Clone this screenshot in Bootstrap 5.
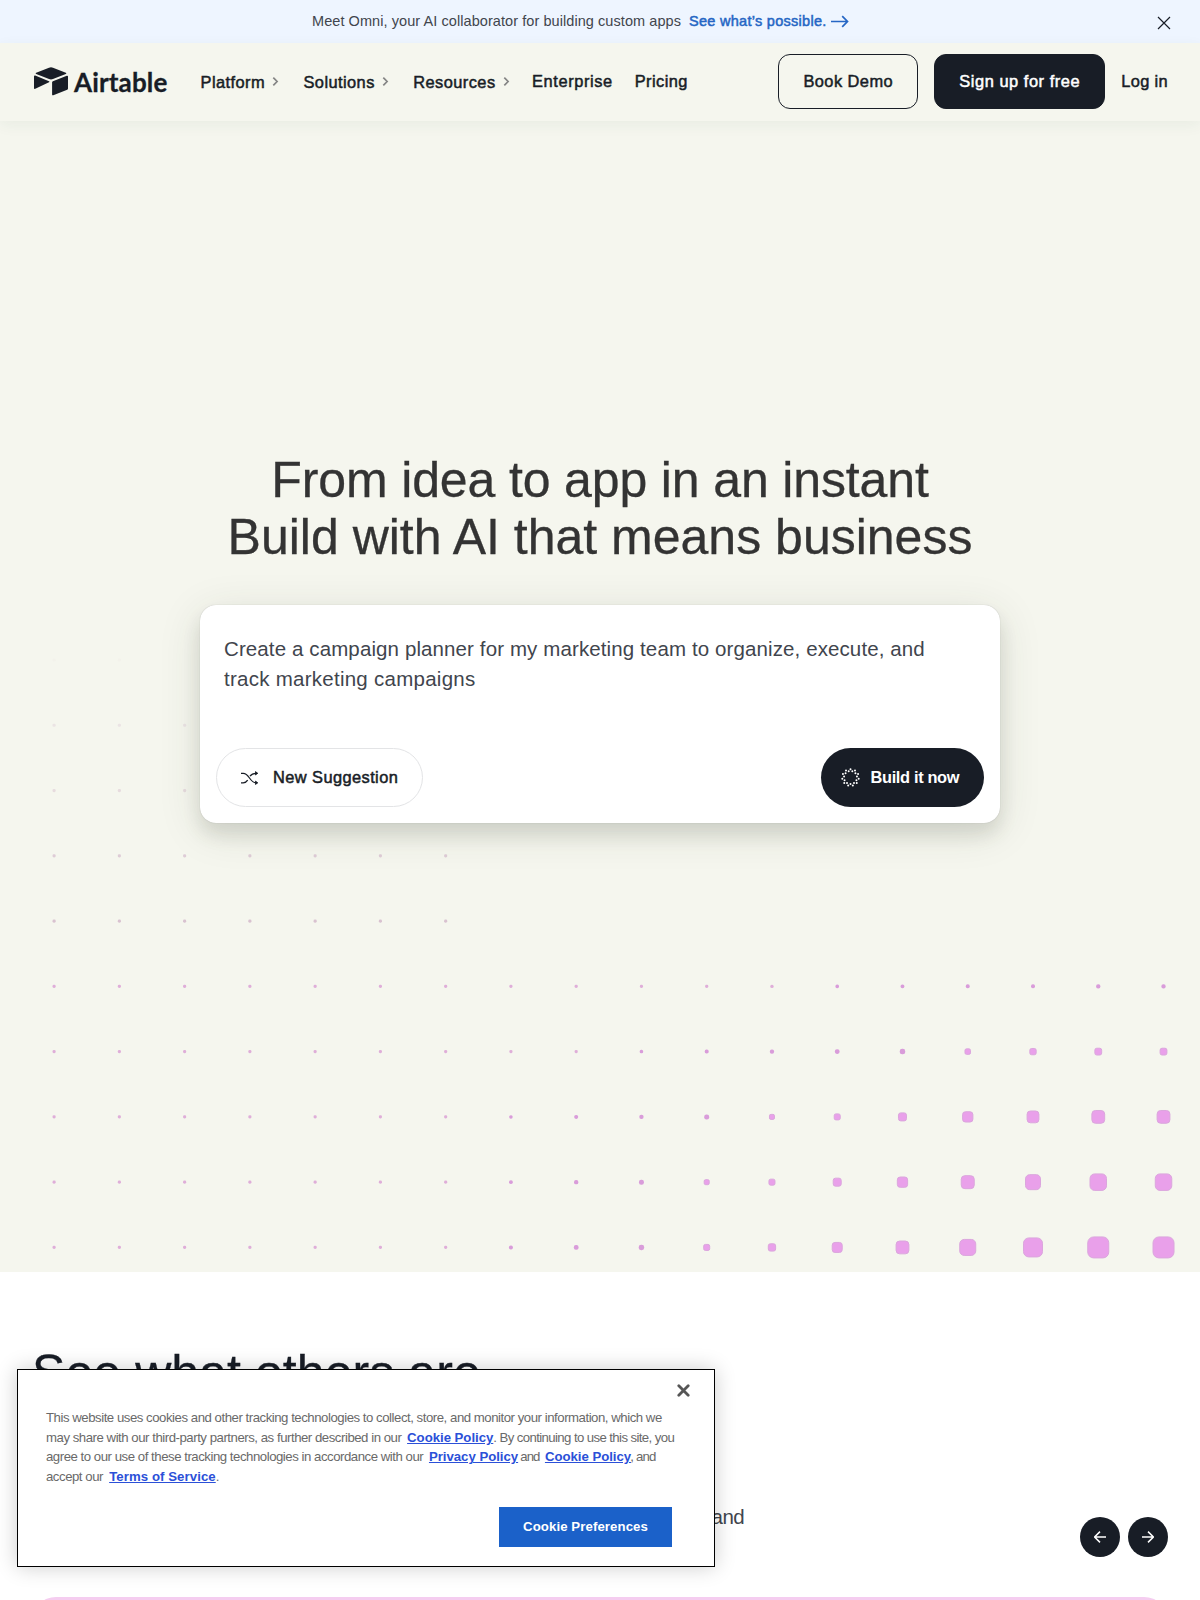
<!DOCTYPE html>
<html lang="en">
<head>
<meta charset="utf-8">
<meta name="viewport" content="width=device-width, initial-scale=1">
<title>Airtable</title>
<link href="https://cdn.jsdelivr.net/npm/bootstrap@5.3.0/dist/css/bootstrap.min.css" rel="stylesheet">
<style>
  :root { --ink: #181d26; --cream: #f5f6ee; }
  html, body { height: 1600px; overflow: hidden; }
  body { font-family: "Liberation Sans", Arial, sans-serif; color: var(--ink); background: #fff; }
  .medium { -webkit-text-stroke: .5px currentColor; }
  svg { display: block; flex: none; }

  .promo { height: 43px; background: #eef5ff; padding: 0 29px 0 312px; font-size: 14.5px; color: #41454d; }
  .promo-copy { letter-spacing: .07px; }
  .promo a { color: #2566c4; margin-left: 8px; letter-spacing: .28px; }
  .promo-x { margin: 2px 0 0 auto; }

  .site-nav { height: 78px; background: var(--cream); box-shadow: 0 4px 14px rgba(30, 90, 60, .06); padding: 0 32px 2px 34px; z-index: 2; }
  .logo { color: inherit; padding-top: 1px; }
  .wordmark { font: 700 26px/30px Lato, sans-serif; letter-spacing: .15px; margin-left: 6px; -webkit-text-stroke: .3px currentColor; }
  .menu { font-size: 16.4px; letter-spacing: .43px; line-height: 24px; margin-left: 33px; }
  .menu a, .login { color: var(--ink); text-decoration: none; }
  .menu .has-sub { padding-top: 1px; margin-right: 24px; }
  .menu .has-sub:nth-child(3) { margin-right: 22px; }
  .menu .wide { margin-right: 22px; letter-spacing: .6px; }
  .has-sub svg { margin-left: 7.5px; }
  .cta { height: 55px; border-radius: 12px; border: 1.3px solid var(--ink); font-size: 16.4px; padding: 0; letter-spacing: .45px; color: var(--ink); }
  .cta-demo { width: 140px; }
  .cta-signup { width: 171px; margin-left: 16px; background: var(--ink); color: #fff; letter-spacing: .55px; }
  .login { font-size: 16.4px; letter-spacing: .35px; margin-left: 16px; }

  .hero { height: 1151px; background: var(--cream); padding-top: 331px; }
  .dot-field { left: 0; bottom: 0; }
  .hero h1 { font-size: 50px; line-height: 57px; font-weight: 400; color: #333; letter-spacing: -.14px; margin: 0 0 38.5px; -webkit-text-stroke: .3px currentColor; }
  .hero h1 .line-two { letter-spacing: 0; }
  .prompt-box { width: 800px; height: 218.5px; border-radius: 16px; background: #fff; padding: 29px 16px 16px;
    box-shadow: 0 0 1px rgba(0, 0, 0, .25), 0 12px 18px rgba(50, 55, 45, .12), 0 8px 44px rgba(50, 55, 45, .12); }
  .prompt-text { font-size: 20.5px; line-height: 30.3px; color: #41454d; margin: 0 8px; letter-spacing: .11px; white-space: nowrap; }
  .prompt-text .line-two { letter-spacing: .26px; }
  .pill { height: 59px; border-radius: 30px; font-size: 16.4px; padding: 0 24px; }
  .pill-light { width: 207px; border: 1px solid #e3e4e6; background: #fff; color: var(--ink); letter-spacing: .42px; padding-right: 0; }
  .pill-light svg { margin-right: 14px; }
  .pill-dark { width: 163px; background: var(--ink); color: #fff; letter-spacing: -.35px; padding: 0 0 0 19.5px; border: 0; font-weight: 700; }
  .pill-dark svg { margin-right: 11px; }

  .stories { height: 328px; background: #fff; padding: 73px 32px 0; }
  .stories h2 { font-size: 50px; line-height: 57px; font-weight: 400; letter-spacing: .07px; margin: 0; -webkit-text-stroke: .3px currentColor; }
  .stories-row { margin-top: 102px; }
  .stories-sub { width: 712px; font-size: 20.5px; line-height: 30px; color: #41454d; letter-spacing: -.6px; text-align: right; margin-top: -2px; }
  .round-btn { width: 40px; height: 40px; border-radius: 50%; background: var(--ink); margin-top: 13px; }
  .story-card { height: 60px; border-radius: 24px; background: #f5cdf0; margin-top: 40px; }

  .cookie-box { left: 17px; top: 1369px; width: 698px; height: 198px; background: #fff; border: 1.3px solid #000; z-index: 5;
    box-shadow: 0 0 20px rgba(0, 0, 0, .2); padding: 0 42px 19px 28px; }
  .cookie-x { margin: 13.5px -18px 0 auto; }
  .cookie-copy { font-size: 13.2px; line-height: 19.65px; color: #696969; margin: 11.5px 0 0; white-space: nowrap; letter-spacing: -.465px; }
  .cookie-copy a { color: #2b50d8; font-weight: 700; letter-spacing: -.02px; margin-left: 2.5px; }
  .cookie-copy .tight { letter-spacing: -.6px; }
  .cookie-copy .tighter { letter-spacing: -.85px; margin-left: -.8px; }
  .cookie-copy .terms { margin-left: 3px; letter-spacing: .08px; }
  .cookie-btn { width: 173px; height: 40px; border-radius: 0; background: #1b61c9; color: #fff; font-size: 13.2px; font-weight: 700; letter-spacing: .1px; padding: 0; border: 0; }
</style>
<script src="https://cdn.jsdelivr.net/npm/bootstrap@5.3.0/dist/js/bootstrap.bundle.min.js"></script>
</head>
<body class="position-relative">

<div class="promo d-flex align-items-center text-nowrap">
  <span class="promo-copy">Meet Omni, your AI collaborator for building custom apps</span>
  <a href="#" class="d-flex align-items-center text-decoration-none medium">See what’s possible.
    <svg class="ms-1" width="18" height="13" viewBox="0 0 18 13" fill="none" stroke="currentColor" stroke-width="1.7"><path d="M0 6.5h16.5M11.2 1.2l5.3 5.3-5.3 5.3"/></svg>
  </a>
  <svg class="promo-x" width="14" height="14" viewBox="0 0 14 14" stroke="#181d26" stroke-width="1.2"><path d="M1 1l12 12M13 1L1 13"/></svg>
</div>

<nav class="site-nav d-flex align-items-center position-relative text-nowrap">
  <a href="#" class="logo d-flex align-items-center text-decoration-none">
    <svg width="34" height="29" viewBox="0 0 34 29" fill="#181d26">
      <path d="M15 .7Q17 -.1 19 .7L31.8 5.7Q33 6.3 31.8 6.9L19 12Q17 12.8 15 12L2.2 6.9Q1 6.3 2.2 5.7Z"/>
      <path d="M18.1 15.3Q18.1 14.5 18.9 14.2L32.8 8.7Q34 8.4 34 9.5V21.5Q34 22.3 33.2 22.7L19.3 28.2Q18.1 28.5 18.1 27.4Z"/>
      <path d="M0 9.4Q.1 8.2 1.2 8.6L15 14.2Q16 14.6 15 15.2L1.3 21.8Q0 22.3 0 21.1Z"/>
    </svg>
    <span class="wordmark">Airtable</span>
  </a>
  <div class="menu medium d-flex">
    <a href="#" class="has-sub d-flex align-items-center">Platform<svg width="7" height="9" viewBox="0 0 7 9" fill="none" stroke="#858585" stroke-width="1.7"><path d="M1.3.7l3.8 3.8-3.8 3.8"/></svg></a>
    <a href="#" class="has-sub d-flex align-items-center">Solutions<svg width="7" height="9" viewBox="0 0 7 9" fill="none" stroke="#858585" stroke-width="1.7"><path d="M1.3.7l3.8 3.8-3.8 3.8"/></svg></a>
    <a href="#" class="has-sub d-flex align-items-center">Resources<svg width="7" height="9" viewBox="0 0 7 9" fill="none" stroke="#858585" stroke-width="1.7"><path d="M1.3.7l3.8 3.8-3.8 3.8"/></svg></a>
    <a href="#" class="wide">Enterprise</a>
    <a href="#">Pricing</a>
  </div>
  <div class="d-flex align-items-center ms-auto">
    <button class="btn cta cta-demo medium">Book Demo</button>
    <button class="btn cta cta-signup medium">Sign up for free</button>
    <a href="#" class="login medium">Log in</a>
  </div>
</nav>

<main class="hero position-relative">
  <svg id="dots" class="dot-field position-absolute" width="1200" height="640"></svg>
  <h1 class="text-center position-relative">From idea to app in an instant<br><span class="line-two">Build with AI that means business</span></h1>
  <section class="prompt-box mx-auto position-relative d-flex flex-column justify-content-between">
    <p class="prompt-text">Create a campaign planner for my marketing team to organize, execute, and<br><span class="line-two">track marketing campaigns</span></p>
    <div class="d-flex justify-content-between">
      <button class="pill pill-light medium d-flex align-items-center">
        <svg width="18" height="14" viewBox="0 0 18 14" fill="none" stroke="#181d26" stroke-width="1.25"><path d="M0 2.3h2.2C8.5 2.3 8.5 11.8 15 11.8h1.4M0 11.8h2.2C4.4 11.8 5.7 10.6 6.7 9.1M9 5.2C10.2 3.5 11.7 2.3 15 2.3h1.4"/><path d="M14.5.6l2.200 1.700-2.200 1.700zM14.5 10.100l2.200 1.700-2.200 1.700z" fill="#181d26" stroke-width=".8"/></svg>
        New Suggestion
      </button>
      <button class="pill pill-dark d-flex align-items-center">
        <svg id="burst" width="19" height="19" viewBox="-9.5 -9.5 19 19" fill="#fff"></svg>
        Build it now
      </button>
    </div>
  </section>
</main>

<section class="stories">
  <h2>See what others are</h2>
  <div class="stories-row d-flex justify-content-between align-items-start">
    <div class="stories-sub">and</div>
    <div class="d-flex gap-2">
      <div class="round-btn d-flex align-items-center justify-content-center"><svg width="12" height="12" viewBox="0 0 12 12" fill="none" stroke="#fff" stroke-width="1.5"><path d="M12 6H.8M6 .6L.6 6 6 11.4"/></svg></div>
      <div class="round-btn d-flex align-items-center justify-content-center"><svg width="12" height="12" viewBox="0 0 12 12" fill="none" stroke="#fff" stroke-width="1.5"><path d="M0 6h11.2M6 .6L11.4 6 6 11.4"/></svg></div>
    </div>
  </div>
  <div class="story-card"></div>
</section>

<aside class="cookie-box position-absolute d-flex flex-column">
  <svg class="cookie-x" width="13" height="13" viewBox="0 0 13 13" stroke="#565656" stroke-width="2.8" stroke-linecap="round"><path d="M1.8 1.8l9.4 9.4M11.2 1.8l-9.4 9.4"/></svg>
  <p class="cookie-copy">This website uses cookies and other tracking technologies to collect, store, and monitor your information, which we<br>may share with our third-party partners, as further described in our <a href="#">Cookie Policy</a><span class="tight">. By continuing to use this site, you</span><br>agree to our use of these tracking technologies in accordance with our <a href="#">Privacy Policy</a><span class="tighter"> and </span><a href="#">Cookie Policy</a><span class="tighter">, and</span><br>accept our <a href="#" class="terms">Terms of Service</a>.</p>
  <button class="btn cookie-btn align-self-end mt-auto">Cookie Preferences</button>
</aside>

<script>
  // Dot grid: n dots per row, o is the row's opacity, s the sizes from the eighth column on
  const rows = [
    { n: 2, o: .05, s: [] },
    { n: 3, o: .25, s: [] },
    { n: 3, o: .38, s: [] },
    { n: 7, o: .6, s: [] },
    { n: 7, o: .75, s: [] },
    { n: 18, o: .9, s: [3, 3, 3, 3, 3.4, 3.6, 3.8, 4, 4, 4.3, 4.3] },
    { n: 18, o: .9, s: [3, 3, 3.5, 4, 4.3, 4.8, 5.5, 6.5, 7.3, 7.8, 7.8] },
    { n: 18, o: .9, s: [3.5, 4, 4.3, 5, 6, 7, 9, 11.3, 12.8, 13.8, 13.8] },
    { n: 18, o: .9, s: [3.8, 4.3, 5, 6, 7, 9, 11.3, 14, 16, 17.5, 17.5] },
    { n: 18, o: .9, s: [4, 4.8, 5.5, 7, 8.3, 11, 13.8, 17, 20, 22, 22] }
  ];
  let out = '';
  rows.forEach((row, r) => {
    const cy = 28 + r * 65.27;
    for (let c = 0; c < row.n; c++) {
      const cx = 54.1 + c * 65.26, size = c < 7 ? 3.2 : Math.max(row.s[c - 7], 3.2);
      const fill = size < 3.5 ? (r < 5 ? '#cfb0c6' : '#dda6d6') : size < 6 ? '#d99cda' : '#e9a0ea';
      const edge = size >= 6 ? ' stroke="#dba6dd" stroke-width="1"' : '';
      const d = size >= 6 ? size - 1 : size;
      const rx = size >= 6 ? d * .28 : d * .45;
      out += `<rect x="${cx - d / 2}" y="${cy - d / 2}" width="${d}" height="${d}" rx="${rx}" fill="${fill}" opacity="${size >= 3.5 ? 1 : row.o}"${edge}/>`;
    }
  });
  document.getElementById('dots').innerHTML = out;

  // Zig-zag ring on the build button
  let ring = '';
  for (let i = 0; i < 22; i++) {
    const a = i * Math.PI / 11 - Math.PI / 2, rad = i % 2 ? 6.5 : 8.3;
    ring += `<circle cx="${rad * Math.cos(a)}" cy="${rad * Math.sin(a)}" r="1"/>`;
  }
  document.getElementById('burst').innerHTML = ring;
</script>
</body>
</html>
